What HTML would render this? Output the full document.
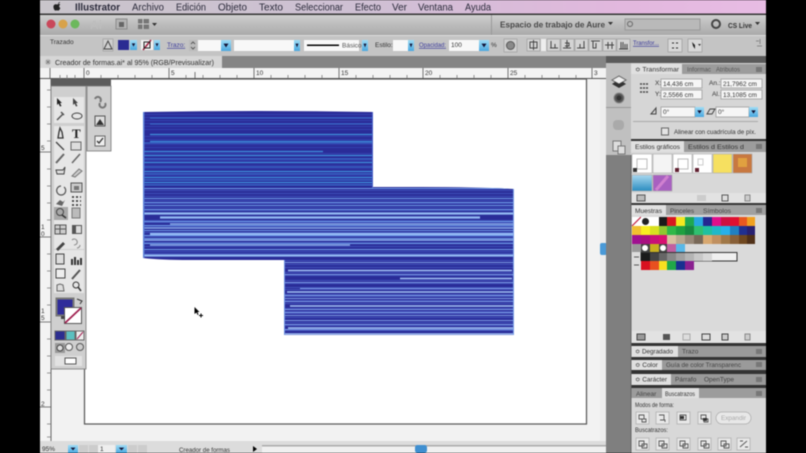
<!DOCTYPE html>
<html><head><meta charset="utf-8"><style>
html,body{margin:0;padding:0;background:#000;width:806px;height:453px;overflow:hidden}
svg{display:block;filter:blur(.55px)}
text{font-family:"Liberation Sans",sans-serif;fill:#333}
.m{font-size:10px;fill:#2a2a3a}
.s{font-size:6.5px;fill:#333}
.b{font-size:6.5px;fill:#3a3a9a;text-decoration:underline}
.t{font-size:6.5px;fill:#333}
.r{font-size:6.5px;fill:#333}
</style></head><body>
<svg width="806" height="453" viewBox="0 0 806 453" xmlns="http://www.w3.org/2000/svg">
<defs>
<linearGradient id="menu" x1="0" x2="1" y1="0" y2="0"><stop offset="0" stop-color="#c9c5cb"/><stop offset=".45" stop-color="#cfc0d4"/><stop offset=".8" stop-color="#e2b8de"/><stop offset="1" stop-color="#e8bce4"/></linearGradient>
<linearGradient id="app" x1="0" x2="0" y1="0" y2="1"><stop offset="0" stop-color="#cfcfcf"/><stop offset="1" stop-color="#a9a9a9"/></linearGradient>
<linearGradient id="blu" x1="0" x2="0" y1="0" y2="1"><stop offset="0" stop-color="#9fdcf5"/><stop offset="1" stop-color="#4aa8e0"/></linearGradient>
<linearGradient id="cy" x1="0" x2="0" y1="0" y2="1"><stop offset="0" stop-color="#a8d8f0"/><stop offset="1" stop-color="#2a8cc0"/></linearGradient>
<symbol id="dd" viewBox="0 0 8 9" preserveAspectRatio="none"><rect width="8" height="9" fill="url(#blu)"/><path d="M2 3h4l-2 3z" fill="#113"/></symbol>
<clipPath id="shape"><path d="M143 112Q260 110 373 112V187H420Q480 187 514 189V335H284V260H190Q160 260 143 258Z"/></clipPath>
</defs>

<rect width="806" height="453" fill="#000"/>
<rect x="40" y="0" width="726" height="14" fill="url(#menu)"/>
<rect x="40" y="13.500" width="726" height="1.500" fill="#333"/>
<path d="M58 4c1-1 2-1 2-2-1 0-2 1-2 2zm-1 .5c-2-.8-4 .6-3.500 3 .3 2 1.500 3.500 2.500 3 .6-.2 1.200-.2 1.800 0 1 .5 2-1 2.500-2.500-1.500-.8-1.500-2.800 0-3.500-1-1-2.300-.8-2.800 0z" fill="#222"/>
<text x="75" y="10.500" class="m" textLength="45" lengthAdjust="spacingAndGlyphs" style="font-weight:bold">Illustrator</text>
<text x="132" y="10.500" class="m" textLength="32" lengthAdjust="spacingAndGlyphs">Archivo</text>
<text x="176" y="10.500" class="m" textLength="30" lengthAdjust="spacingAndGlyphs">Edición</text>
<text x="218" y="10.500" class="m" textLength="29" lengthAdjust="spacingAndGlyphs">Objeto</text>
<text x="259" y="10.500" class="m" textLength="24" lengthAdjust="spacingAndGlyphs">Texto</text>
<text x="295" y="10.500" class="m" textLength="48" lengthAdjust="spacingAndGlyphs">Seleccionar</text>
<text x="355" y="10.500" class="m" textLength="26" lengthAdjust="spacingAndGlyphs">Efecto</text>
<text x="392" y="10.500" class="m" textLength="15" lengthAdjust="spacingAndGlyphs">Ver</text>
<text x="418" y="10.500" class="m" textLength="35" lengthAdjust="spacingAndGlyphs">Ventana</text>
<text x="465" y="10.500" class="m" textLength="26" lengthAdjust="spacingAndGlyphs">Ayuda</text>

<rect x="40" y="15" width="726" height="20" fill="url(#app)"/>
<circle cx="51" cy="24" r="4.500" fill="#c9485a"/><circle cx="63" cy="24" r="4.500" fill="#d8a24a"/><circle cx="75" cy="24" r="4.500" fill="#6cb85c"/>
<text x="90" y="29" style="font-size:12px;fill:#bdbdbd;font-weight:bold">Ai</text>
<rect x="116" y="19" width="11" height="10" fill="#b4b4b4" stroke="#8a8a8a"/><rect x="119" y="22" width="5" height="5" fill="#666"/>
<rect x="138" y="19" width="11" height="10" fill="#777"/><path d="M143 19v10M138 24h11" stroke="#ccc"/><path d="M152 23h5l-2.500 3z" fill="#333"/>
<rect x="491" y="15" width="1" height="20" fill="#999"/>
<text x="500" y="27.500" style="font-size:8px;fill:#333;font-weight:bold;opacity:.85" textLength="105" lengthAdjust="spacingAndGlyphs">Espacio de trabajo de Aure</text>
<path d="M608 22h5l-2.500 3z" fill="#333"/>
<rect x="625" y="19" width="75" height="11" fill="#b9b9b9" stroke="#999"/><circle cx="630" cy="24" r="2.500" fill="none" stroke="#666"/>
<circle cx="716" cy="24" r="4" fill="none" stroke="#444" stroke-width="2"/>
<text x="728" y="28" style="font-size:7.500px;fill:#333;font-weight:bold" textLength="24" lengthAdjust="spacingAndGlyphs">CS Live</text>
<path d="M755 22h5l-2.500 3z" fill="#333"/>

<rect x="40" y="35" width="726" height="21" fill="#c4c4c4"/>
<rect x="40" y="35" width="726" height="1" fill="#ddd"/>
<text x="50" y="44" class="s">Trazado</text>
<rect x="103" y="39" width="10" height="12" fill="#d0d0d0" stroke="#aaa"/><path d="M108 41l-4 8h8z" fill="none" stroke="#444"/>
<rect x="118" y="40" width="11" height="10" fill="#2b2b92"/><use href="#dd" x="130" y="40" width="7" height="10"/>
<rect x="141" y="40" width="12" height="10" fill="#f5f5f5"/><path d="M143 50l8-10" stroke="#a02040" stroke-width="1.500"/><path d="M144 42h6v6h-6z" fill="none" stroke="#222"/><use href="#dd" x="154" y="40" width="6" height="10"/>
<text x="167" y="47" class="b">Trazo:</text>
<rect x="189" y="40" width="8" height="11" fill="#bbb"/><path d="M191 44l2-2 2 2M191 47l2 2 2-2" stroke="#444" fill="none" stroke-width=".8"/>
<rect x="198" y="40" width="23" height="11" fill="#f8f8f8"/><use href="#dd" x="221" y="40" width="10" height="11"/>
<rect x="234" y="40" width="60" height="11" fill="#f8f8f8"/><use href="#dd" x="294" y="40" width="6" height="11"/>
<rect x="304" y="40" width="55" height="11" fill="#f8f8f8"/><rect x="307" y="44.500" width="32" height="1.500" fill="#000"/><text x="342" y="47.500" class="s" style="fill:#555">Básico</text>
<use href="#dd" x="362" y="40" width="6" height="11"/>
<text x="375" y="47" class="s">Estilo:</text>
<rect x="393" y="40" width="15" height="11" fill="#f8f8f8"/><use href="#dd" x="408" y="40" width="6" height="11"/>
<text x="419" y="47" class="b" textLength="27" lengthAdjust="spacingAndGlyphs">Opacidad:</text>
<rect x="449" y="40" width="30" height="11" fill="#f8f8f8"/><text x="451" y="47" class="s">100</text><use href="#dd" x="479" y="40" width="10" height="11"/>
<text x="491" y="47" class="s">%</text>
<rect x="504" y="39" width="13" height="13" fill="#d0d0d0" stroke="#aaa"/><circle cx="510.500" cy="45.500" r="4" fill="#8a8a8a" stroke="#555"/>
<rect x="527" y="39" width="13" height="12" fill="#d4d4d4" stroke="#aaa"/><path d="M530 42h7v6h-7zM533.500 40v10" stroke="#444" fill="none"/><rect x="541" y="39" width="5" height="12" fill="#eee"/>
<rect x="547" y="39" width="13" height="12" fill="#d4d4d4" stroke="#aaa"/><path d="M550 48h8M551 41v7h4v-4" stroke="#444" fill="none"/>
<rect x="561" y="39" width="13" height="12" fill="#d4d4d4" stroke="#aaa"/><path d="M563 48h8M567 40v8M565 43h4v3h-4" stroke="#444" fill="none"/>
<rect x="575" y="39" width="13" height="12" fill="#d4d4d4" stroke="#aaa"/><path d="M577 48h8M584 41v7h-4v-4" stroke="#444" fill="none"/>
<rect x="589" y="39" width="13" height="12" fill="#d4d4d4" stroke="#aaa"/><path d="M591 41h9M593 41v7h3v-5" stroke="#444" fill="none"/>
<rect x="603" y="39" width="13" height="12" fill="#d4d4d4" stroke="#aaa"/><path d="M605 45h9M608 42v7M612 42v7" stroke="#444" fill="none"/>
<rect x="617" y="39" width="13" height="12" fill="#d4d4d4" stroke="#aaa"/><path d="M619 49h9M621 42v7h2v-7M625 44v5h2v-5" stroke="#444" fill="none"/>
<text x="633" y="45" class="b" textLength="26" lengthAdjust="spacingAndGlyphs">Transfor...</text>
<rect x="668" y="39" width="14" height="13" fill="#d8d8d8" stroke="#aaa"/><path d="M672 43h2M676 43h2M672 48h2M676 48h2" stroke="#222"/>
<rect x="688" y="39" width="14" height="13" fill="#d8d8d8" stroke="#aaa"/><path d="M692 42l3 3v4l-2-3z" fill="#222"/><path d="M698 44h3l-1.500 2z" fill="#333"/>
<path d="M756 41h3M760 39v5M757 46h5" stroke="#888" fill="none"/>

<rect x="40" y="56" width="566" height="12" fill="#858585"/>
<rect x="40" y="56" width="182" height="12" fill="#d6d6d6"/>
<circle cx="48" cy="62" r="3" fill="#bbb"/><path d="M46.500 60.500l3 3M49.500 60.500l-3 3" stroke="#666" stroke-width=".7"/>
<text x="55" y="65" style="font-size:7px;fill:#333" textLength="159" lengthAdjust="spacingAndGlyphs">Creador de formas.ai* al 95% (RGB/Previsualizar)</text>

<rect x="40" y="68" width="566" height="11" fill="#f3f3f3"/>
<rect x="40" y="78" width="566" height="1" fill="#555"/>
<path d="M50 68v11M84 68v11M169 68v11M195 72v7M254 68v11M339 68v11M423 68v11M508 68v11M592 68v11" stroke="#555" stroke-width=".8"/>
<path d="M60 75v4M67 75v4M75 75v4M101 75v4M118 75v4M135 75v4M152 75v4M186 75v4M203 75v4M220 75v4M237 75v4M271 75v4M288 75v4M305 75v4M322 75v4M356 75v4M373 75v4M390 75v4M407 75v4M440 75v4M457 75v4M474 75v4M491 75v4M525 75v4M542 75v4M559 75v4M576 75v4" stroke="#777" stroke-width=".8"/>
<text x="86" y="75" class="r">0</text><text x="171" y="75" class="r">5</text><text x="256" y="75" class="r">10</text><text x="341" y="75" class="r">15</text><text x="425" y="75" class="r">20</text><text x="510" y="75" class="r">25</text><text x="594" y="75" class="r">3</text>

<rect x="51" y="79" width="555" height="362" fill="#f2f2f2"/>
<rect x="84.500" y="79" width="502" height="345" fill="#fff" stroke="#555" stroke-width="1.200"/>
<rect x="40" y="79" width="11" height="362" fill="#f3f3f3"/>
<rect x="50.500" y="79" width="1" height="362" fill="#666"/>
<path d="M40 152h11M40 237h11M40 322h11M40 407h11" stroke="#555" stroke-width=".8"/>
<path d="M47 90h4M47 107h4M47 124h4M47 141h4M47 169h4M47 186h4M47 203h4M47 220h4M47 254h4M47 271h4M47 288h4M47 305h4M47 339h4M47 356h4M47 373h4M47 390h4M47 424h4M47 437h4" stroke="#777" stroke-width=".8"/>
<text x="41" y="150" class="r">5</text><text x="41" y="229" class="r">1</text><text x="41" y="236" class="r">0</text><text x="41" y="313" class="r">1</text><text x="41" y="320" class="r">5</text><text x="41" y="406" class="r">2</text>

<!-- artwork -->
<g clip-path="url(#shape)">
<rect x="140" y="110" width="380" height="228" fill="#2a2c98"/>
<path stroke="#3340ae" stroke-width="1" fill="none" d="M143 114.500h230M143 117.500h230M143 120.500h230M143 123.500h230M143 126.500h230M143 129.500h230M143 136.500h230M143 139.500h230M143 144.500h230M143 147.500h230M143 153.500h230M143 158.500h230M143 160.500h230M143 165.500h230M143 168.500h230M143 173.500h230M143 175.500h230M143 179.500h230M143 184.500h230"/>
<path stroke="#3a70cc" stroke-width="1" fill="none" d="M150 118h223M150 124h223M143 143h230M143 159h230M143 167h230M143 174h230M143 180h230M143 185h230"/>
<path stroke="#3f8fdc" stroke-width="1.300" fill="none" d="M150 134.500h223M150 141.500h223M143 151.500h180M143 155.500h230M143 162.500h230M143 171.500h230M143 177.500h230M143 182.500h230"/>
<path stroke="#3d4fb8" stroke-width="1" fill="none" d="M143 190.500h371M143 193.500h371M143 196.500h371M143 200.500h371M143 203.500h371M143 207.500h371M143 210.500h371M143 220.500h371M143 222.500h371M143 226.500h371M143 232.500h371M143 236.500h371M143 240.500h371M143 242.500h371M143 246.500h371M143 251.500h371M143 253.500h371"/>
<path stroke="#6f9be8" stroke-width="1" fill="none" d="M143 188.500h371M143 198.500h371M143 202.500h371M143 205.500h371M143 209.500h371M143 221.500h371M143 225.500h371M143 230.500h371M143 235.500h371M143 238.500h371M143 243.500h371M143 249.500h371"/>
<path stroke="#94baf4" stroke-width="2.200" fill="none" d="M143 213.500h371M160 217.500h320M143 255.500h371M150 234h364"/>
<path stroke="#94baf4" stroke-width="1.200" fill="none" d="M170 224h344M143 228h371M150 245h200M143 240h371"/>
<path stroke="#4050b8" stroke-width="1" fill="none" d="M284 260.500h230M284 264.500h230M284 267.500h230M284 272.500h230M284 275.500h230M284 280.500h230M284 283.500h230M284 287.500h230M284 289.500h230M284 294.500h230M284 296.500h230M284 300.500h230M284 303.500h230M284 308.500h230M284 311.500h230M284 313.500h230M284 317.500h230M284 322.500h230M284 325.500h230M284 330.500h230"/>
<path stroke="#7c9ce6" stroke-width="1" fill="none" d="M284 262.500h230M284 274.500h230M284 282.500h230M300 288.500h214M284 295.500h230M284 298.500h230M284 301.500h230M284 309.500h230M284 312.500h230M284 315.500h230M284 320.500h230M284 324.500h230M284 329.500h230"/>
<path stroke="#a2c2f6" stroke-width="1.600" fill="none" d="M288 270.500h224M400 278.500h112M287 292h227M290 306h224M288 328h226M284 334h230"/>
<rect x="143" y="110" width="1.500" height="150" fill="#5a7fd8"/><rect x="283.500" y="260" width="1.500" height="76" fill="#6a8fe0"/><rect x="513" y="187" width="1.500" height="150" fill="#7a9fe6"/><rect x="372" y="110" width="1.200" height="78" fill="#4a62c8"/>
</g>

<path d="M194.500 307l5 5h-2l1 2.500-1 .5-1-2.500-2 1.500z" fill="#000"/><path d="M201 313.500v4M199 315.500h4" stroke="#000"/>

<!-- toolbox -->
<rect x="51" y="79" width="60" height="7" fill="#5c5c5c"/>
<rect x="51" y="86" width="35" height="283" fill="#cfcfcf" stroke="#777" stroke-width=".8"/>
<rect x="87" y="86" width="24" height="65" fill="#cfcfcf" stroke="#777" stroke-width=".8"/>
<g fill="#e6e6e6">
<rect x="54" y="97" width="30" height="26"/><rect x="54" y="126" width="30" height="56"/><rect x="54" y="182" width="30" height="40"/><rect x="54" y="222" width="30" height="27"/><rect x="54" y="250" width="30" height="43"/>
</g>
<rect x="54" y="207" width="14" height="13" fill="#a8a8a8"/>
<path d="M57 98l5 5h-2l1.500 3-1.500.5-1.500-3-1.500 1.500z" fill="#222"/>
<path d="M73 98l5 5h-2l1.500 3-1.500.5-1.500-3-1.500 1.500z" fill="#444"/>
<path d="M57 120l6-6M61 112l3 3" stroke="#555" stroke-width="1.500"/>
<ellipse cx="77" cy="116" rx="5" ry="3" fill="none" stroke="#444"/>
<path d="M60 128l2 4 1 6h-5l1-6z" fill="none" stroke="#333" stroke-width="1.300"/>
<text x="72" y="138" style="font-family:'Liberation Serif',serif;font-size:13px;font-weight:bold;fill:#222">T</text>
<path d="M56 142l8 8" stroke="#444" stroke-width="1.300"/>
<rect x="71" y="142" width="10" height="8" fill="#ddd" stroke="#666"/>
<path d="M56 163l8-9" stroke="#666" stroke-width="2"/><path d="M72 163l8-9" stroke="#666" stroke-width="1.500"/>
<path d="M56 170h7l2-3-1 7h-7z" fill="#ddd" stroke="#444"/><path d="M72 176l7-7 3 2-7 6z" fill="#ccc" stroke="#777"/>
<path d="M64 187a4.500 4.500 0 1 1-3-1" fill="none" stroke="#555" stroke-width="1.200"/>
<rect x="71" y="183" width="11" height="9" fill="#ccc" stroke="#555"/><path d="M74 186h5v4h-5z" fill="#777"/>
<path d="M56 204l4-4 3 2 2-2-3 6z" fill="#666"/>
<path d="M72 197h2M76 197h2M80 197h1M72 201h2M76 201h2M80 201h1M72 205h2M76 205h2M80 205h1" stroke="#222" stroke-width="1.500"/>
<circle cx="60" cy="212" r="3.500" fill="none" stroke="#444"/><path d="M62 215l4 3" stroke="#333" stroke-width="1.500"/>
<rect x="72" y="208" width="8" height="10" fill="#bbb" stroke="#777"/>
<rect x="55" y="225" width="11" height="9" fill="#ccc" stroke="#555"/><path d="M55 229h11M60 225v9" stroke="#555"/>
<rect x="72" y="225" width="10" height="9" fill="#555"/><rect x="76" y="226" width="5" height="7" fill="#ddd"/>
<path d="M56 249l7-7 2 2-7 7z" fill="#444"/>
<path d="M72 240a3 3 0 1 1 2 5M80 245a3 3 0 0 1-3 3" fill="none" stroke="#888"/>
<rect x="56" y="254" width="8" height="10" fill="#ddd" stroke="#444"/>
<path d="M72 265v-6M75 265v-8M78 265v-5M81 265v-7" stroke="#333" stroke-width="2"/>
<rect x="56" y="269" width="9" height="9" fill="#eee" stroke="#444"/>
<path d="M72 279l8-9" stroke="#555" stroke-width="2"/>
<path d="M57 291v-6l3-1 3 1 1 6z" fill="#ddd" stroke="#666"/>
<circle cx="76" cy="285" r="3" fill="none" stroke="#333"/><path d="M78 287l3 4" stroke="#333" stroke-width="1.500"/>
<rect x="56.500" y="298.500" width="17" height="17" fill="#2f2c9a" stroke="#777" stroke-width="2"/>
<rect x="64.500" y="307.500" width="17" height="16" fill="#fff" stroke="#555"/><path d="M65 323l16-15" stroke="#a02050" stroke-width="1.800"/>
<rect x="61" y="316" width="4" height="3" fill="#444"/>
<path d="M77 299l5 2-2 3" fill="none" stroke="#333"/>
<rect x="55" y="330" width="26" height="11" fill="#ddd"/>
<rect x="55" y="331" width="10" height="9" fill="#2c2e90" stroke="#666"/>
<rect x="66" y="331" width="9" height="9" fill="#5cc0c0" stroke="#666"/>
<rect x="76" y="331" width="8" height="9" fill="#eee" stroke="#666"/><path d="M77 339l6-7" stroke="#a02050"/>
<rect x="55" y="343" width="10" height="10" fill="#999"/><circle cx="60" cy="348" r="3" fill="#ddd" stroke="#444"/>
<circle cx="69" cy="347" r="3.500" fill="#eee" stroke="#555"/><circle cx="80" cy="347" r="3.500" fill="#ccc" stroke="#555"/>
<rect x="55" y="356" width="27" height="10" fill="#e2e2e2"/><rect x="65" y="358" width="11" height="6" fill="#fff" stroke="#555"/>
<path d="M95 99a3 3 0 1 1 5 3M100 103a3 3 0 1 0 5 0" fill="none" stroke="#777" stroke-width="2"/>
<rect x="95" y="116" width="10" height="10" fill="#ddd" stroke="#555"/><path d="M96 125l4-6 4 6z" fill="#333"/>
<rect x="95" y="136" width="10" height="10" fill="#eee" stroke="#666"/><path d="M97 141l2 2 4-5" stroke="#333" fill="none" stroke-width="1.300"/>

<rect x="600" y="79" width="6" height="362" fill="#ededed"/>
<rect x="600" y="243" width="7" height="12" rx="2" fill="#4a9ad8"/>

<rect x="40" y="441" width="566" height="12" fill="#dcdcdc"/>
<text x="42" y="451" class="s">95%</text>
<use href="#dd" x="68" y="445" width="10" height="8"/>
<rect x="79" y="445" width="9" height="8" fill="#ccc"/><rect x="89" y="445" width="9" height="8" fill="#ccc"/>
<rect x="98" y="445" width="17" height="8" fill="#eee"/><text x="100" y="451" class="s">1</text>
<use href="#dd" x="116" y="445" width="11" height="8"/>
<rect x="128" y="445" width="9" height="8" fill="#ccc"/><rect x="138" y="445" width="9" height="8" fill="#ccc"/>
<text x="179" y="452" class="s" textLength="51" lengthAdjust="spacingAndGlyphs">Creador de formas</text>
<path d="M253 446l4 3-4 3z" fill="#000"/>
<rect x="262" y="446" width="344" height="7" fill="#f0f0f0"/><rect x="262" y="445" width="344" height="1.500" fill="#aaa"/>
<rect x="415" y="445" width="12" height="8" rx="2.500" fill="#3f8fd0"/>

<rect x="606" y="56" width="160" height="397" fill="#7f7f7f"/>
<rect x="606" y="56" width="160" height="7" fill="#5a5a5a"/>
<rect x="606" y="63" width="25" height="92" fill="#c0c0c0"/>
<rect x="606" y="107" width="25" height="1" fill="#999"/>
<path d="M612 80l7-4 7 4-7 4z" fill="#eee" stroke="#666"/><path d="M612 84l7 4 7-4-3-2-4 2-4-2z" fill="#333"/>
<circle cx="619" cy="98" r="5" fill="#555" stroke="#888"/><circle cx="619" cy="98" r="2.500" fill="#333"/>
<rect x="613" y="120" width="11" height="10" rx="4" fill="#aaa"/><rect x="613" y="141" width="8" height="10" fill="#ddd" stroke="#777"/><path d="M618 146h7v8h-7z" fill="#ddd" stroke="#777"/>

<rect x="631" y="63" width="135" height="76" fill="#d6d6d6"/>
<rect x="631" y="64" width="135" height="10" fill="#9c9c9c"/>
<rect x="631" y="64" width="51" height="10" fill="#e0e0e0"/>
<text x="635" y="71.500" class="t" textLength="44" lengthAdjust="spacingAndGlyphs">≎ Transformar</text>
<text x="687" y="71.500" class="t" style="fill:#555" textLength="24" lengthAdjust="spacingAndGlyphs">Informac</text>
<text x="716" y="71.500" class="t" style="fill:#555" textLength="24" lengthAdjust="spacingAndGlyphs">Atributos</text>
<path d="M640 84h2M643 84h2M646 84h2M640 88h2M643 88h2M646 88h2M640 92h2M643 92h2M646 92h2" stroke="#444" stroke-width="1.500"/>
<text x="655" y="85" class="s">X:</text><rect x="661" y="79" width="41" height="9" fill="#f6f6f6" stroke="#aaa"/><text x="663" y="86" class="s">14,436 cm</text>
<text x="655" y="96" class="s">Y:</text><rect x="661" y="90" width="41" height="9" fill="#f6f6f6" stroke="#aaa"/><text x="663" y="97" class="s">2,5566 cm</text>
<text x="709" y="85" class="s">An.:</text><rect x="721" y="79" width="41" height="9" fill="#f6f6f6" stroke="#aaa"/><text x="723" y="86" class="s">21,7962 cm</text>
<text x="712" y="96" class="s">Al.:</text><rect x="721" y="90" width="41" height="9" fill="#f6f6f6" stroke="#aaa"/><text x="723" y="97" class="s">13,1085 cm</text>
<path d="M651 114l5-6v6z" fill="none" stroke="#444"/><rect x="661" y="107" width="34" height="10" fill="#f6f6f6" stroke="#aaa"/><text x="663" y="114" class="s">0°</text><use href="#dd" x="695" y="107" width="9" height="10"/>
<path d="M707 114l3-5h5l-3 5z" fill="none" stroke="#444"/><rect x="716" y="107" width="33" height="10" fill="#f6f6f6" stroke="#aaa"/><text x="718" y="114" class="s">0°</text><use href="#dd" x="749" y="107" width="9" height="10"/>
<rect x="633" y="121" width="125" height="1" fill="#aaa"/>
<rect x="661.500" y="128" width="7" height="7" fill="#e4e4e4" stroke="#666"/>
<text x="674" y="134" class="s" textLength="82" lengthAdjust="spacingAndGlyphs">Alinear con cuadrícula de píx.</text>

<rect x="631" y="139" width="135" height="2.500" fill="#333"/>
<rect x="631" y="141" width="135" height="62" fill="#d8d8d8"/>
<rect x="631" y="141" width="135" height="11" fill="#9c9c9c"/>
<rect x="631" y="141" width="53" height="11" fill="#e0e0e0"/>
<text x="635" y="149" class="t" textLength="45" lengthAdjust="spacingAndGlyphs">Estilos gráficos</text>
<text x="688" y="149" class="t" textLength="27" lengthAdjust="spacingAndGlyphs">Estilos d</text>
<text x="717" y="149" class="t" textLength="27" lengthAdjust="spacingAndGlyphs">Estilos d</text>
<g stroke="#aaa" stroke-width=".6">
<rect x="632" y="154" width="20" height="19" fill="#fff"/><rect x="653" y="154" width="19" height="19" fill="#f4f4f4"/><rect x="673" y="154" width="19" height="19" fill="#fff"/><rect x="693" y="154" width="19" height="19" fill="#fff"/><rect x="713" y="154" width="19" height="19" fill="#f6e060"/><rect x="733" y="154" width="19" height="19" fill="#c87840"/>
<rect x="632" y="175" width="20" height="16" fill="url(#cy)"/><rect x="653" y="175" width="19" height="16" fill="#a860c0"/>
</g>
<rect x="637" y="159" width="10" height="10" fill="none" stroke="#bbb"/><rect x="678" y="159" width="10" height="10" fill="none" stroke="#bbb"/><rect x="698" y="159" width="5" height="6" fill="none" stroke="#ccc"/>
<rect x="633" y="168" width="4" height="4" fill="#333"/><rect x="675" y="168" width="4" height="4" fill="#602030"/><rect x="695" y="168" width="4" height="4" fill="#602030"/>
<rect x="738" y="158" width="9" height="9" fill="#e0a040"/><path d="M656 190l12-14" stroke="#d080d0" stroke-width="3"/>
<rect x="631" y="193" width="135" height="10" fill="#e2e2e2"/>
<rect x="637" y="195" width="8" height="6" fill="#bbb" stroke="#555"/><rect x="697" y="195" width="9" height="6" fill="#ccc"/><rect x="722" y="195" width="6" height="6" fill="#ddd" stroke="#555"/><rect x="745" y="195" width="5" height="6" fill="#ccc" stroke="#888"/>

<rect x="631" y="203" width="135" height="2.500" fill="#333"/>
<rect x="631" y="205" width="135" height="126" fill="#dadada"/>
<rect x="631" y="205" width="135" height="10" fill="#a0a0a0"/>
<rect x="631" y="205" width="35" height="10" fill="#e0e0e0"/>
<text x="635" y="213" class="t" textLength="27" lengthAdjust="spacingAndGlyphs">Muestras</text>
<text x="670" y="213" class="t" style="fill:#444" textLength="24" lengthAdjust="spacingAndGlyphs">Pinceles</text>
<text x="703" y="213" class="t" style="fill:#444" textLength="28" lengthAdjust="spacingAndGlyphs">Símbolos</text>
<g>
<rect x="632" y="217" width="9" height="9" fill="#fff"/><path d="M632 226l9-9" stroke="#c02040" stroke-width="1.200"/><rect x="641" y="217" width="9" height="9" fill="#fff"/><circle cx="645.500" cy="221.500" r="3.500" fill="#222"/><rect x="650" y="217" width="9" height="9" fill="#fff"/><rect x="659" y="217" width="8" height="9" fill="#1a1a1a"/><rect x="667" y="217" width="9" height="9" fill="#d81820"/><rect x="676" y="217" width="9" height="9" fill="#f4e820"/><rect x="685" y="217" width="9" height="9" fill="#20a850"/><rect x="694" y="217" width="9" height="9" fill="#28a8e0"/><rect x="703" y="217" width="9" height="9" fill="#252890"/><rect x="712" y="217" width="9" height="9" fill="#e0108a"/><rect x="721" y="217" width="9" height="9" fill="#d01040"/><rect x="730" y="217" width="9" height="9" fill="#e01030"/><rect x="739" y="217" width="8" height="9" fill="#e85820"/><rect x="747" y="217" width="8" height="9" fill="#f0a020"/>
<rect x="632" y="226" width="9" height="9" fill="#f0c030"/><rect x="641" y="226" width="9" height="9" fill="#f8ee20"/><rect x="650" y="226" width="9" height="9" fill="#d8e020"/><rect x="659" y="226" width="8" height="9" fill="#90c830"/><rect x="667" y="226" width="9" height="9" fill="#30b848"/><rect x="676" y="226" width="9" height="9" fill="#20a040"/><rect x="685" y="226" width="9" height="9" fill="#188840"/><rect x="694" y="226" width="9" height="9" fill="#30c070"/><rect x="703" y="226" width="9" height="9" fill="#20c0a0"/><rect x="712" y="226" width="9" height="9" fill="#20b8c8"/><rect x="721" y="226" width="9" height="9" fill="#28b0e8"/><rect x="730" y="226" width="9" height="9" fill="#2080c0"/><rect x="739" y="226" width="8" height="9" fill="#203090"/><rect x="747" y="226" width="8" height="9" fill="#282070"/>
<rect x="632" y="235" width="9" height="9" fill="#a01090"/><rect x="641" y="235" width="9" height="9" fill="#a81080"/><rect x="650" y="235" width="9" height="9" fill="#c81078"/><rect x="659" y="235" width="8" height="9" fill="#d81070"/><rect x="667" y="235" width="9" height="9" fill="#d8c0a0"/><rect x="676" y="235" width="9" height="9" fill="#b8a890"/><rect x="685" y="235" width="9" height="9" fill="#988878"/><rect x="694" y="235" width="9" height="9" fill="#786858"/><rect x="703" y="235" width="9" height="9" fill="#d8a870"/><rect x="712" y="235" width="9" height="9" fill="#c09060"/><rect x="721" y="235" width="9" height="9" fill="#a07848"/><rect x="730" y="235" width="9" height="9" fill="#886038"/><rect x="739" y="235" width="8" height="9" fill="#704820"/><rect x="747" y="235" width="8" height="9" fill="#503018"/>
<rect x="632" y="244" width="9" height="8" fill="#999"/><rect x="641" y="244" width="9" height="8" fill="#444"/><circle cx="645" cy="248" r="3" fill="#fff"/><rect x="650" y="244" width="9" height="8" fill="#c8b020"/><rect x="659" y="244" width="8" height="8" fill="#444"/><circle cx="663" cy="248" r="3" fill="#fff"/><rect x="667" y="244" width="9" height="8" fill="#c060a0"/><rect x="676" y="244" width="9" height="8" fill="#58b8e8"/>
<rect x="632" y="253" width="9" height="8" fill="#ddd"/><path d="M634 257h5" stroke="#555"/>
<rect x="641" y="252.500" width="96" height="8.500" fill="#f0f0f0" stroke="#333"/>
<rect x="641" y="253" width="9" height="8" fill="#1a1a1a"/><rect x="650" y="253" width="9" height="8" fill="#444"/><rect x="659" y="253" width="8" height="8" fill="#666"/><rect x="667" y="253" width="9" height="8" fill="#888"/><rect x="676" y="253" width="9" height="8" fill="#a0a0a0"/><rect x="685" y="253" width="9" height="8" fill="#b4b4b4"/><rect x="694" y="253" width="9" height="8" fill="#c8c8c8"/><rect x="703" y="253" width="9" height="8" fill="#d8d8d8"/>
<rect x="632" y="261" width="9" height="9" fill="#ddd"/><path d="M634 265h5" stroke="#555"/>
<rect x="641" y="261" width="9" height="9" fill="#d81020"/><rect x="650" y="261" width="9" height="9" fill="#e85020"/><rect x="659" y="261" width="8" height="9" fill="#f8e020"/><rect x="667" y="261" width="9" height="9" fill="#20a848"/><rect x="676" y="261" width="9" height="9" fill="#183090"/><rect x="685" y="261" width="9" height="9" fill="#8a2090"/>
</g>
<rect x="631" y="331" width="135" height="12" fill="#e2e2e2"/>
<rect x="637" y="334" width="8" height="6" fill="#999" stroke="#444"/><rect x="663" y="334" width="7" height="6" fill="#555"/><rect x="683" y="334" width="7" height="6" fill="#ddd" stroke="#aaa"/><rect x="702" y="334" width="8" height="6" fill="#ddd" stroke="#444"/><rect x="722" y="334" width="6" height="6" fill="#ccc" stroke="#444"/><rect x="745" y="334" width="5" height="6" fill="#ccc" stroke="#888"/>

<rect x="631" y="343" width="135" height="3" fill="#333"/>
<rect x="631" y="346" width="135" height="11" fill="#9a9a9a"/><rect x="631" y="346" width="47" height="11" fill="#e0e0e0"/>
<text x="635" y="353.500" class="t" textLength="38" lengthAdjust="spacingAndGlyphs">≎ Degradado</text><text x="682" y="353.500" class="t" style="fill:#444">Trazo</text>
<rect x="631" y="357" width="135" height="3" fill="#333"/>
<rect x="631" y="360" width="135" height="10" fill="#9a9a9a"/><rect x="631" y="360" width="31" height="10" fill="#e0e0e0"/>
<text x="635" y="367" class="t">≎ Color</text><text x="666" y="367" class="t" style="fill:#444" textLength="75" lengthAdjust="spacingAndGlyphs">Guía de color  Transparenc</text>
<rect x="631" y="370" width="135" height="4" fill="#333"/>
<rect x="631" y="374" width="135" height="11" fill="#9a9a9a"/><rect x="631" y="374" width="40" height="11" fill="#e0e0e0"/>
<text x="635" y="381.500" class="t" textLength="32" lengthAdjust="spacingAndGlyphs">≎ Carácter</text><text x="675" y="381.500" class="t" style="fill:#444">Párrafo</text><text x="704" y="381.500" class="t" style="fill:#444">OpenType</text>
<rect x="631" y="385" width="135" height="3" fill="#333"/>
<rect x="631" y="388" width="135" height="65" fill="#d8d8d8"/>
<rect x="631" y="388" width="135" height="10" fill="#9c9c9c"/><rect x="662" y="388" width="37" height="10" fill="#e0e0e0"/>
<text x="636" y="396" class="t" style="fill:#444">Alinear</text><text x="665" y="396" class="t" textLength="30" lengthAdjust="spacingAndGlyphs">Buscatrazos</text>
<text x="635" y="407" class="s" textLength="39" lengthAdjust="spacingAndGlyphs">Modos de forma:</text>
<g fill="#e8e8e8" stroke="#aaa" stroke-width=".7">
<rect x="636" y="412" width="13" height="12"/><rect x="656" y="412" width="13" height="12"/><rect x="677" y="412" width="13" height="12"/><rect x="698" y="412" width="13" height="12"/>
<rect x="716" y="412" width="35" height="12" rx="6"/>
<rect x="636" y="438" width="13" height="12"/><rect x="656" y="438" width="13" height="12"/><rect x="677" y="438" width="13" height="12"/><rect x="698" y="438" width="13" height="12"/><rect x="718" y="438" width="13" height="12"/><rect x="737" y="438" width="13" height="12"/>
</g>
<g fill="none" stroke="#555" stroke-width=".9">
<path d="M639 415h5v4h-5zM642 419h4v3h-4z"/><path d="M659 415h5v5M660 420h5v2"/><path d="M680 415h6v5h-6z"/><path d="M701 415h5v4h-5zM704 419h4v3h-4z"/>
<path d="M639 441h5v5h-5zM642 444h5v4h-5z"/><path d="M659 441h5v5h-5zM662 444h5v4h-5z"/><path d="M680 441h5v5h-5zM683 444h5v4h-5z"/><path d="M701 441h5v5h-5zM704 444h5v4h-5z"/><path d="M721 441h5v5h-5zM724 444h5v4h-5z"/><path d="M740 447l7-6M740 441h3M745 447h3"/>
</g>
<rect x="680" y="416" width="4" height="3" fill="#333"/><rect x="703" y="418" width="4" height="3" fill="#333"/>
<text x="721" y="420" class="s" style="fill:#aaa" textLength="25" lengthAdjust="spacingAndGlyphs">Expandir</text>
<text x="635" y="432" class="s" textLength="33" lengthAdjust="spacingAndGlyphs">Buscatrazos:</text>
<g fill="#777"><rect x="756" y="67" width="6" height="5"/><rect x="756" y="144" width="6" height="5"/><rect x="756" y="208" width="6" height="5"/><rect x="756" y="349" width="6" height="5"/><rect x="756" y="362" width="6" height="5"/><rect x="756" y="377" width="6" height="5"/><rect x="756" y="391" width="6" height="5"/></g>
<rect x="630.500" y="155" width="1" height="298" fill="#666"/>
</svg>
</body></html>
